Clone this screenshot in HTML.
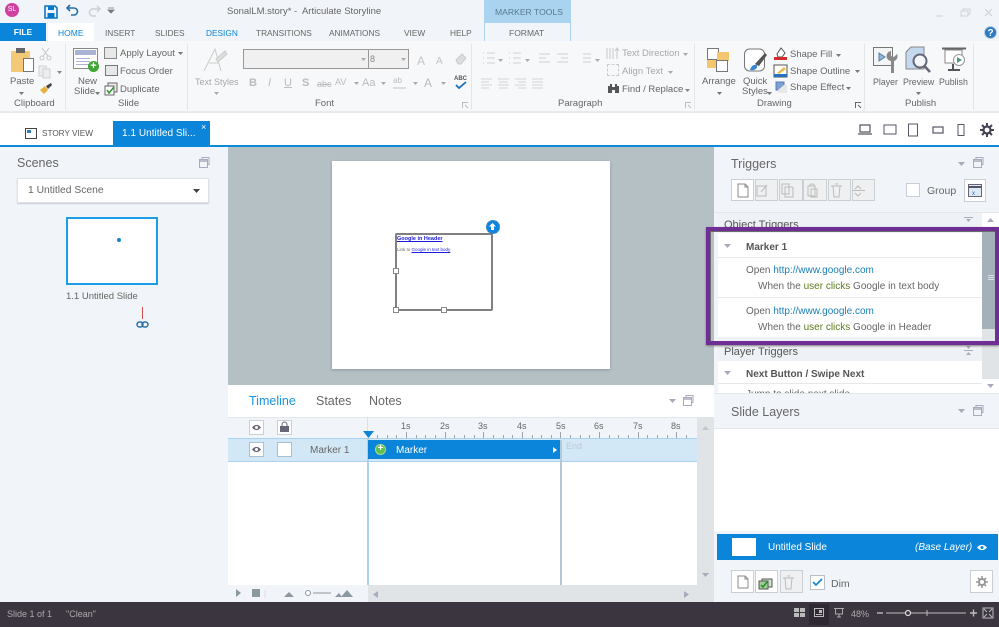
<!DOCTYPE html>
<html><head><meta charset="utf-8"><style>
html,body{margin:0;padding:0;background:#fff}
#p{position:relative;width:999px;height:627px;overflow:hidden;background:#fff;font-family:"Liberation Sans",sans-serif;color:#666;font-size:9.5px;filter:blur(.35px)}
.a{position:absolute}
.t{position:absolute;white-space:nowrap;line-height:12px;margin-top:1px}
.g{color:#a8a8a8}
.b{position:absolute;box-sizing:border-box;border:1px solid #c9cfd3;background:#fff}
svg{position:absolute;overflow:visible}
</style></head><body><div id="p">
<!-- backgrounds -->
<div class="a" style="left:0;top:0;width:999px;height:41px;background:#f1f4f8"></div>
<div class="a" style="left:0;top:41px;width:999px;height:72px;background:#f7f8f9;border-bottom:2px solid #e8eaec;box-sizing:border-box"></div>
<div class="a" style="left:0;top:145px;width:999px;height:2px;background:#0a8ad9"></div>
<div class="a" style="left:0;top:147px;width:228px;height:455px;background:#f1f4f8"></div>
<div class="a" style="left:228px;top:147px;width:486px;height:238px;background:#b5c0c5"></div>
<div class="a" style="left:714px;top:147px;width:285px;height:455px;background:#f1f4f8"></div>

<!-- title bar -->
<div class="a" style="left:5px;top:3px;width:14px;height:14px;border-radius:50%;background:#d0409f;color:#fff;font-size:7px;line-height:14px;text-align:center">SL</div>
<svg style="left:44px;top:5px" width="14" height="14"><path d="M1 1h10l2 2v10H1z" fill="none" stroke="#0a78c8" stroke-width="1.6"/><path d="M4 1h6v4H4zM3.500 8h7v5h-7z" fill="#0a78c8"/></svg>
<svg style="left:66px;top:4px" width="13" height="12"><path d="M4 1L1 4l3 3M1 4h7a3.500 3.500 0 0 1 0 7H5" fill="none" stroke="#2a6fa8" stroke-width="1.600"/></svg>
<svg style="left:88px;top:5px" width="13" height="12" opacity=".35"><path d="M9 1l3 3-3 3M12 4H5a3.500 3.500 0 0 0 0 7h3" fill="none" stroke="#8a8a8a" stroke-width="1.400"/></svg>
<svg style="left:108px;top:8px" width="7" height="6"><path d="M0 0h6M0 2h6l-3 3z" stroke="#777" stroke-width=".8" fill="#777"/></svg>
<span class="t" style="left:227px;top:5px;font-size:9.500px;color:#666">SonalLM.story* -&nbsp; Articulate Storyline</span>
<div class="a" style="left:484px;top:0;width:87px;height:41px;background:#a9d3ef"></div>
<div class="a" style="left:485px;top:23px;width:85px;height:18px;background:#f1f4f8"></div>
<span class="t" style="left:495px;top:5px;font-size:8.600px;color:#587a90">MARKER TOOLS</span>
<span class="t" style="left:509px;top:26px;font-size:8.500px;color:#666">FORMAT</span>
<svg style="left:936px;top:8px" width="60" height="10" stroke="#d0d4d8" fill="none"><path d="M0 8h7"/><path d="M25 3h7v5h-7zM27 3V1h7v5h-2"/><path d="M49 1l7 7M56 1l-7 7" stroke-width="1.200"/></svg>
<div class="a" style="left:984px;top:26px;width:13px;height:13px;border-radius:50%;background:#2b7cc4;color:#fff;font-size:10px;font-weight:bold;line-height:13px;text-align:center;border:1px solid #bcd;box-sizing:border-box">?</div>

<!-- tabs -->
<div class="a" style="left:0;top:23px;width:46px;height:18px;background:#0a85d9;color:#fff;font-size:8.500px;line-height:19px;text-align:center;font-weight:bold">FILE</div>
<div class="a" style="left:48px;top:23px;width:46px;height:18px;background:#fff"></div>
<span class="t" style="left:58px;top:26px;font-size:8.500px;color:#0a85d9">HOME</span>
<span class="t" style="left:105px;top:26px;font-size:8.300px">INSERT</span>
<span class="t" style="left:155px;top:26px;font-size:8.300px">SLIDES</span>
<span class="t" style="left:206px;top:26px;font-size:8.300px;color:#0a85d9">DESIGN</span>
<span class="t" style="left:256px;top:26px;font-size:8.300px">TRANSITIONS</span>
<span class="t" style="left:329px;top:26px;font-size:8.300px">ANIMATIONS</span>
<span class="t" style="left:404px;top:26px;font-size:8.300px">VIEW</span>
<span class="t" style="left:450px;top:26px;font-size:8.300px">HELP</span>

<!-- ribbon separators -->
<div class="a" style="left:65px;top:44px;width:1px;height:66px;background:#e4e6e8"></div>
<div class="a" style="left:187px;top:44px;width:1px;height:66px;background:#e4e6e8"></div>
<div class="a" style="left:471px;top:44px;width:1px;height:66px;background:#e4e6e8"></div>
<div class="a" style="left:694px;top:44px;width:1px;height:66px;background:#e4e6e8"></div>
<div class="a" style="left:864px;top:44px;width:1px;height:66px;background:#e4e6e8"></div>
<div class="a" style="left:973px;top:44px;width:1px;height:66px;background:#e4e6e8"></div>

<!-- clipboard -->
<div class="a" style="left:11px;top:51px;width:19px;height:21px;background:#f3c877;border-radius:1px"></div>
<div class="a" style="left:16px;top:48px;width:9px;height:5px;background:#666"></div>
<div class="a" style="left:23px;top:58px;width:11px;height:14px;background:#fff;border:1px solid #777;box-sizing:border-box"></div>
<svg style="left:39px;top:47px" width="13" height="14" stroke="#c4c8cc" fill="none"><path d="M3 1l6 8M10 1L4 9"/><circle cx="3" cy="11" r="2"/><circle cx="10" cy="11" r="2"/></svg>
<svg style="left:38px;top:65px" width="14" height="14" stroke="#cdd0d3" fill="#eee"><path d="M1 1h7v10H1z"/><path d="M5 4h7v9H5z"/></svg>
<svg style="left:57px;top:71px" width="5" height="3"><path d="M0 0h5L2.500 3z" fill="#888"/></svg>
<span class="t" style="left:10px;top:75px">Paste</span>
<svg style="left:19px;top:92px" width="5" height="3"><path d="M0 0h5L2.500 3z" fill="#777"/></svg>
<svg style="left:39px;top:82px" width="14" height="13"><path d="M1 8l5-4 3 4-4 4z" fill="#e8b040"/><path d="M7 4l5-3 1 2-4 4z" fill="#444"/></svg>
<span class="t" style="left:14px;top:97px;font-size:9.500px">Clipboard</span>

<!-- slide -->
<div class="a" style="left:73px;top:48px;width:25px;height:21px;background:#fff;border:1px solid #888;box-sizing:border-box"></div>
<div class="a" style="left:75px;top:50px;width:21px;height:5px;background:#aab4d4"></div>
<div class="a" style="left:76px;top:58px;width:14px;height:1px;background:#aab4d4"></div>
<div class="a" style="left:76px;top:61px;width:14px;height:1px;background:#aab4d4"></div>
<div class="a" style="left:76px;top:64px;width:14px;height:1px;background:#aab4d4"></div>
<div class="a" style="left:88px;top:61px;width:11px;height:11px;border-radius:50%;background:#3fa535;color:#fff;font-size:11px;line-height:10px;text-align:center;font-weight:bold">+</div>
<span class="t" style="left:78px;top:75px">New</span>
<span class="t" style="left:74px;top:85px">Slide</span>
<svg style="left:95px;top:92px" width="5" height="3"><path d="M0 0h5L2.500 3z" fill="#777"/></svg>
<div class="a" style="left:104px;top:47px;width:13px;height:12px;background:#e8e8e8;border:1px solid #888;box-sizing:border-box"></div>
<div class="a" style="left:105px;top:65px;width:13px;height:11px;background:#e8e8e8;border:1.500px solid #777;box-sizing:border-box"></div>
<svg style="left:104px;top:82px" width="14" height="14"><path d="M4 1h9v9H4z" fill="#eee" stroke="#666"/><path d="M1 4h9v9H1z" fill="#fff" stroke="#666"/><path d="M3 8l2 3 5-6" fill="none" stroke="#3a9a3a" stroke-width="1.600"/></svg>
<span class="t" style="left:120px;top:47px">Apply Layout</span>
<svg style="left:178px;top:52px" width="5" height="3"><path d="M0 0h5L2.500 3z" fill="#777"/></svg>
<span class="t" style="left:120px;top:65px">Focus Order</span>
<span class="t" style="left:120px;top:83px">Duplicate</span>
<span class="t" style="left:118px;top:97px;font-size:9.500px">Slide</span>

<!-- font -->
<svg style="left:202px;top:47px" width="28" height="26" stroke="#ccc" fill="none"><path d="M2 24L13 2l6 22M7 16h10"/><path d="M14 12l9-8 2 3-9 8z" fill="#ddd"/></svg>
<span class="t g" style="left:195px;top:75px;font-size:9px">Text Styles</span>
<svg style="left:214px;top:92px" width="5" height="3"><path d="M0 0h5L2.500 3z" fill="#aaa"/></svg>
<div class="a" style="left:243px;top:49px;width:126px;height:20px;background:#f0f0f0;border:1px solid #999;box-sizing:border-box"></div>
<div class="a" style="left:368px;top:49px;width:41px;height:20px;background:#f0f0f0;border:1px solid #999;box-sizing:border-box"></div>
<span class="t" style="left:370px;top:52px;font-size:9px;color:#888">8</span>
<svg style="left:361px;top:58px" width="5" height="3"><path d="M0 0h5L2.500 3z" fill="#aaa"/></svg>
<svg style="left:401px;top:58px" width="5" height="3"><path d="M0 0h5L2.500 3z" fill="#aaa"/></svg>
<span class="t" style="left:417px;top:54px;font-size:12px;color:#c4c4c4">A</span>
<span class="t" style="left:436px;top:55px;font-size:10px;color:#c4c4c4">A</span>
<svg style="left:455px;top:53px" width="12" height="12"><path d="M1 7l6-6 4 4-5 6H3z" fill="#ddd" stroke="#ccc"/></svg>
<span class="t" style="left:249px;top:76px;color:#bbb;font-weight:bold;font-size:11px">B</span>
<span class="t" style="left:268px;top:76px;color:#bbb;font-style:italic;font-size:11px">I</span>
<span class="t" style="left:284px;top:76px;color:#bbb;text-decoration:underline;font-size:11px">U</span>
<span class="t" style="left:302px;top:76px;color:#bbb;font-weight:bold;font-size:11px">S</span>
<span class="t" style="left:317px;top:77px;color:#bbb;font-size:9px;text-decoration:line-through">abc</span>
<span class="t" style="left:335px;top:75px;color:#bbb;font-size:9px">AV</span>
<span class="t" style="left:362px;top:76px;color:#bbb;font-size:11px">Aa</span>
<span class="t" style="left:393px;top:74px;color:#bbb;font-size:8px">ab</span>
<div class="a" style="left:393px;top:87px;width:13px;height:2px;background:#ddd"></div>
<span class="t" style="left:424px;top:76px;color:#bbb;font-size:12px">A</span>
<svg style="left:354px;top:82px" width="90" height="3" fill="#aaa"><path d="M0 0h5L2.500 3zM27 0h5l-2.500 3zM59 0h5l-2.500 3zM87 0h5l-2.500 3z"/></svg>
<span class="t" style="left:454px;top:72px;font-size:6px;font-weight:bold;color:#555">ABC</span>
<svg style="left:455px;top:81px" width="12" height="9"><path d="M1 4l3 3 7-6" fill="none" stroke="#1f6fc0" stroke-width="1.800"/></svg>
<span class="t" style="left:315px;top:97px;font-size:9.500px">Font</span>
<svg style="left:462px;top:102px" width="7" height="7" stroke="#bbb" fill="none"><path d="M.5 6V.5H6M3 3l3 3"/></svg>

<!-- paragraph -->
<svg style="left:481px;top:52px" width="130" height="14" stroke="#d0d0d0" fill="none"><path d="M2 1h1M6 1h8M2 6h1M6 6h8M2 11h1M6 11h8M28 1h1M32 1h8M28 6h1M32 6h8M28 11h1M32 11h8M58 2h11M58 6h7M58 10h11M76 2h11M80 6h7M76 10h11M102 2h8M102 6h8M102 10h8"/></svg>
<svg style="left:498px;top:59px" width="103" height="3" fill="#aaa"><path d="M0 0h5L2.500 3zM27 0h5l-2.500 3zM97 0h5l-2.500 3z"/></svg>
<svg style="left:481px;top:78px" width="65" height="11" stroke="#d4d4d4" fill="none"><path d="M0 1h11M0 4h8M0 7h11M0 10h8M17 1h11M18 4h9M17 7h11M18 10h9M34 1h11M37 4h8M34 7h11M37 10h8M51 1h11M51 4h11M51 7h11M51 10h11"/></svg>
<svg style="left:606px;top:47px" width="14" height="13" stroke="#c8c8c8" fill="none"><path d="M1 1v11M4 1v11M7 1v11M11 12V2M9 4l2-3 2 3"/></svg>
<span class="t g" style="left:622px;top:47px">Text Direction</span>
<div class="a" style="left:607px;top:64px;width:12px;height:12px;border:1px dashed #ccc;box-sizing:border-box"></div>
<span class="t g" style="left:622px;top:65px">Align Text</span>
<svg style="left:607px;top:83px" width="13" height="11"><path d="M1 3h4v7H1zM8 3h4v7H8zM3 1h2v3H3zM8 1h2v3H8zM5 4h3v3H5z" fill="#555"/></svg>
<span class="t" style="left:622px;top:83px">Find / Replace</span>
<svg style="left:683px;top:53px" width="5" height="3"><path d="M0 0h5L2.500 3z" fill="#aaa"/></svg>
<svg style="left:685px;top:89px" width="5" height="3"><path d="M0 0h5L2.500 3z" fill="#888"/></svg>
<svg style="left:668px;top:71px" width="5" height="3"><path d="M0 0h5L2.500 3z" fill="#aaa"/></svg>
<span class="t" style="left:558px;top:97px;font-size:9.500px">Paragraph</span>
<svg style="left:685px;top:102px" width="7" height="7" stroke="#bbb" fill="none"><path d="M.5 6V.5H6M3 3l3 3"/></svg>

<!-- drawing -->
<div class="a" style="left:707px;top:48px;width:10px;height:10px;background:#fff;border:1px solid #777"></div>
<div class="a" style="left:717px;top:52px;width:12px;height:9px;background:#f3c66f"></div>
<div class="a" style="left:707px;top:60px;width:12px;height:8px;background:#f3c66f"></div>
<div class="a" style="left:716px;top:60px;width:10px;height:10px;background:#fff;border:1px solid #777"></div>
<span class="t" style="left:702px;top:75px">Arrange</span>
<svg style="left:717px;top:92px" width="5" height="3"><path d="M0 0h5L2.500 3z" fill="#777"/></svg>
<svg style="left:744px;top:47px" width="24" height="26"><rect x="0.500" y="2" width="20" height="22" rx="5" fill="#fff" stroke="#777"/><path d="M11 17l10-11 2 2-8 11z" fill="#555"/><path d="M6 23c1-4 4-6 7-5 1 3-2 6-7 5z" fill="#3a86d0"/></svg>
<span class="t" style="left:743px;top:75px">Quick</span>
<span class="t" style="left:742px;top:85px">Styles</span>
<svg style="left:767px;top:92px" width="5" height="3"><path d="M0 0h5L2.500 3z" fill="#777"/></svg>
<svg style="left:773px;top:47px" width="16" height="14"><path d="M4 7l4-6 4 5-3 4H5z" fill="#fff" stroke="#555"/><rect x="1" y="10" width="13" height="3" fill="#d42b2b"/></svg>
<svg style="left:773px;top:64px" width="16" height="14"><rect x="1" y="1" width="13" height="12" fill="#fff" stroke="#555"/><path d="M4 9l7-6 2 2-7 5z" fill="#f0b840"/><rect x="1" y="10" width="13" height="3" fill="#2a70c0"/></svg>
<svg style="left:773px;top:80px" width="16" height="15"><rect x="3" y="2" width="8" height="8" fill="#7d9fd4" stroke="#5a7db8"/><path d="M11 5h3v8H5v-3" fill="#e8e8e8"/></svg>
<span class="t" style="left:790px;top:48px">Shape Fill</span>
<span class="t" style="left:790px;top:65px">Shape Outline</span>
<span class="t" style="left:790px;top:81px">Shape Effect</span>
<svg style="left:836px;top:54px" width="5" height="3"><path d="M0 0h5L2.500 3z" fill="#777"/></svg>
<svg style="left:855px;top:70px" width="5" height="3"><path d="M0 0h5L2.500 3z" fill="#777"/></svg>
<svg style="left:846px;top:87px" width="5" height="3"><path d="M0 0h5L2.500 3z" fill="#777"/></svg>
<span class="t" style="left:757px;top:97px;font-size:9.500px">Drawing</span>
<svg style="left:855px;top:102px" width="7" height="7" stroke="#666" fill="none"><path d="M.5 6V.5H6M3 3l3 3"/></svg>

<!-- publish -->
<svg style="left:873px;top:47px" width="25" height="28"><rect x=".5" y=".5" width="19" height="18" fill="#f2f4f6" stroke="#777"/><path d="M6 6l6 4-6 4z" fill="#8eb4da" stroke="#5a7fa8"/><path d="M14 7a5 5 0 0 0 4 7v12h3V14a5 5 0 0 0 3-7l-3 3-3-1V4a5 5 0 0 0-4 3z" fill="#888"/></svg>
<svg style="left:905px;top:46px" width="27" height="28"><path d="M6 1h13v22H1V6z" fill="#c4d8ee" stroke="#888"/><circle cx="15" cy="15" r="6.500" fill="#f4f7fa" stroke="#667" stroke-width="2"/><path d="M19.500 20l5.500 6" stroke="#667" stroke-width="2.500"/></svg>
<svg style="left:942px;top:47px" width="26" height="27"><path d="M0 1.500h24" stroke="#666" stroke-width="2"/><rect x="3" y="3" width="17" height="13" fill="#fff" stroke="#888"/><circle cx="17" cy="13" r="5.500" fill="#fff" stroke="#999"/><path d="M15 10l5 3-5 3z" fill="#4f9a78"/><path d="M6 23h12M11 17v6" stroke="#555" stroke-width="2"/></svg>
<span class="t" style="left:873px;top:75px;font-size:8.800px">Player</span>
<span class="t" style="left:903px;top:75px;font-size:8.800px">Preview</span>
<svg style="left:916px;top:92px" width="5" height="3"><path d="M0 0h5L2.500 3z" fill="#777"/></svg>
<span class="t" style="left:939px;top:75px;font-size:8.800px">Publish</span>
<span class="t" style="left:905px;top:97px;font-size:9.500px">Publish</span>

<!-- doc tabs -->
<div class="a" style="left:25px;top:128px;width:12px;height:11px;background:#fff;border:1px solid #444;box-sizing:border-box"></div>
<div class="a" style="left:27px;top:130px;width:4px;height:3px;background:#2a7dc0"></div>
<span class="t" style="left:42px;top:127px;font-size:8.200px;color:#555">STORY VIEW</span>
<div class="a" style="left:113px;top:121px;width:97px;height:25px;background:#0a85d9"></div>
<span class="t" style="left:122px;top:127px;font-size:10.100px;color:#fff">1.1 Untitled Sli...</span>
<span class="t" style="left:201px;top:120px;font-size:9px;color:#fff">×</span>
<svg style="left:858px;top:123px" width="135" height="15" stroke="#556" fill="none"><path d="M2 2h10v7H2zM0 11h14" stroke-width="1.200"/><rect x="26" y="2" width="12" height="9"/><rect x="50.500" y="1" width="9" height="12"/><rect x="75" y="4" width="10" height="6" stroke-width="1.200"/><rect x="100" y="1.500" width="6" height="11"/></svg>
<svg style="left:980px;top:123px" width="14" height="14"><circle cx="7" cy="7" r="3.500" fill="none" stroke="#445" stroke-width="2.200"/><path d="M7 0v3M7 11v3M0 7h3M11 7h3M2 2l2 2M10 10l2 2M12 2l-2 2M4 10l-2 2" stroke="#445" stroke-width="2"/></svg>

<!-- scenes -->
<span class="t" style="left:17px;top:155px;font-size:12.500px;line-height:14px">Scenes</span>
<svg style="left:199px;top:157px" width="11" height="11" stroke="#aab" fill="none"><path d="M3 2V.5h7v7H8.500"/><rect x=".5" y="2.500" width="8" height="8"/><path d="M.5 4h8" stroke-width="1.500"/></svg>
<div class="a" style="left:17px;top:178px;width:192px;height:25px;background:#fff;border:1px solid #dde2e6;box-sizing:border-box;box-shadow:0 1px 1px #ccd"></div>
<span class="t" style="left:28px;top:184px;font-size:10.300px">1 Untitled Scene</span>
<svg style="left:193px;top:189px" width="7" height="4"><path d="M0 0h7L3.500 4z" fill="#444"/></svg>
<div class="a" style="left:66px;top:217px;width:92px;height:68px;background:#fff;border:2px solid #1b9de8;box-sizing:border-box"></div>
<div class="a" style="left:117px;top:238px;width:4px;height:4px;border-radius:50%;background:#1a80c8"></div>
<span class="t" style="left:66px;top:290px;font-size:9.500px">1.1 Untitled Slide</span>
<div class="a" style="left:142px;top:307px;width:1px;height:12px;background:#d05050"></div>
<svg style="left:136px;top:321px" width="13" height="7"><rect x="1" y="1" width="6" height="5" rx="2.500" fill="none" stroke="#2a6fa8" stroke-width="1.500"/><rect x="6" y="1" width="6" height="5" rx="2.500" fill="none" stroke="#2a6fa8" stroke-width="1.500"/></svg>

<!-- slide canvas -->
<div class="a" style="left:332px;top:161px;width:278px;height:208px;background:#fff;box-shadow:0 1px 3px #8a979d"></div>
<div class="a" style="left:395px;top:233px;width:98px;height:78px;border:2px solid #808080;border-radius:2px;box-sizing:border-box"></div>
<span class="t" style="left:397px;top:235px;font-size:5.500px;line-height:7px;color:#1a1ae0;font-weight:bold;text-decoration:underline">Google in Header</span>
<span class="t" style="left:397px;top:246px;font-size:4.500px;line-height:6px;color:#666">Link to <span style="color:#1a1ae0;text-decoration:underline">Google in text body</span></span>
<div class="a" style="left:393px;top:268px;width:6px;height:6px;background:#fff;border:1px solid #888;box-sizing:border-box"></div>
<div class="a" style="left:393px;top:307px;width:6px;height:6px;background:#fff;border:1px solid #888;box-sizing:border-box"></div>
<div class="a" style="left:441px;top:307px;width:6px;height:6px;background:#fff;border:1px solid #888;box-sizing:border-box"></div>
<div class="a" style="left:486px;top:220px;width:12px;height:12px;border-radius:50%;background:#0a85e0;border:1px dashed #5a8ab0"></div>
<svg style="left:489px;top:223px" width="7" height="8"><path d="M3.500 0L7 3.500H5V7H2V3.500H0z" fill="#fff"/></svg>

<!-- triggers -->
<span class="t" style="left:731px;top:156px;font-size:12.500px;line-height:14px">Triggers</span>
<svg style="left:958px;top:162px" width="7" height="4"><path d="M0 0h7L3.500 4z" fill="#aab"/></svg>
<svg style="left:973px;top:157px" width="11" height="11" stroke="#aab" fill="none"><path d="M3 2V.5h7v7H8.500"/><rect x=".5" y="2.500" width="8" height="8"/><path d="M.5 4h8" stroke-width="1.500"/></svg>
<div class="b" style="left:731px;top:179px;width:23px;height:22px"></div>
<div class="b" style="left:755px;top:179px;width:23px;height:22px;background:#eef0f2"></div>
<div class="b" style="left:779px;top:179px;width:24px;height:22px;background:#eef0f2"></div>
<div class="b" style="left:803px;top:179px;width:24px;height:22px;background:#eef0f2"></div>
<div class="b" style="left:828px;top:179px;width:23px;height:22px;background:#eef0f2"></div>
<div class="b" style="left:852px;top:179px;width:23px;height:22px;background:#eef0f2"></div>
<svg style="left:737px;top:183px" width="135" height="15" fill="none" stroke="#888"><path d="M1 1h7l3 3v10H1zM8 1v3h3"/><g stroke="#bbb"><path d="M20 3h9v10h-9zM24 9l6-7"/><path d="M45 1h7v10h-7zM48 4h7l1 1v9h-8z"/><path d="M71 3h7v10h-7zM74 6h6v8h-6zM72 3l2-2h2l2 2"/><path d="M94 3h11M96 3l1 11h5l1-11M98 1h3"/><path d="M118 6l3-3 3 3M118 10l3 3 3-3M115 7.500h13"/></g></svg>
<div class="b" style="left:906px;top:183px;width:14px;height:14px"></div>
<span class="t" style="left:927px;top:184px;font-size:10.500px">Group</span>
<div class="b" style="left:964px;top:179px;width:22px;height:23px"></div>
<svg style="left:968px;top:184px" width="14" height="13"><rect x=".5" y=".5" width="13" height="12" fill="#dce8f4" stroke="#667"/><path d="M.5 3h13" stroke="#556" stroke-width="2"/></svg>
<span class="t" style="left:972px;top:187px;font-size:6px;color:#3a70b0">x</span>

<div class="a" style="left:714px;top:212px;width:285px;height:1px;background:#e3e7ea"></div>
<div class="a" style="left:718px;top:213px;width:264px;height:180px;background:#fff"></div>
<div class="a" style="left:718px;top:213px;width:264px;height:20px;background:#eef1f5"></div>
<span class="t" style="left:724px;top:218px;font-size:11px;color:#555">Object Triggers</span>
<div class="a" style="left:982px;top:213px;width:17px;height:180px;background:#e1e4e7"></div>
<div class="a" style="left:982px;top:213px;width:17px;height:16px;background:#fff"></div>
<div class="a" style="left:982px;top:379px;width:17px;height:14px;background:#fff"></div>
<div class="a" style="left:982px;top:231px;width:17px;height:98px;background:#a5b1b9"></div>
<svg style="left:987px;top:218px" width="7" height="4"><path d="M3.500 0L7 4H0z" fill="#aab"/></svg>
<svg style="left:987px;top:384px" width="7" height="4"><path d="M0 0h7L3.500 4z" fill="#aab"/></svg>
<svg style="left:988px;top:275px" width="6" height="6" stroke="#dde"><path d="M0 .5h6M0 2.500h6M0 4.500h6"/></svg>

<svg style="left:724px;top:244px" width="7" height="4"><path d="M0 0h7L3.500 4z" fill="#aab"/></svg>
<span class="t" style="left:746px;top:241px;font-size:10px;font-weight:bold;color:#555">Marker 1</span>
<div class="a" style="left:718px;top:257px;width:264px;height:1px;background:#e6e8ea"></div>
<span class="t" style="left:746px;top:264px;font-size:10px">Open <span style="color:#1a80b8">http://www.google.com</span></span>
<span class="t" style="left:758px;top:280px;font-size:10px">When the <span style="color:#5c7a20">user clicks</span> Google in text body</span>
<div class="a" style="left:718px;top:297px;width:264px;height:1px;background:#e6e8ea"></div>
<span class="t" style="left:746px;top:305px;font-size:10px">Open <span style="color:#1a80b8">http://www.google.com</span></span>
<span class="t" style="left:758px;top:321px;font-size:10px">When the <span style="color:#5c7a20">user clicks</span> Google in Header</span>

<div class="a" style="left:718px;top:337px;width:264px;height:24px;background:#eef1f5"></div>
<span class="t" style="left:724px;top:345px;font-size:11px;color:#555">Player Triggers</span>
<svg style="left:964px;top:346px" width="9" height="10" stroke="#aab" fill="#aab"><path d="M0 4.500h9" fill="none"/><path d="M2 0h5L4.500 3zM2 9h5L4.500 6z" stroke="none"/></svg>
<svg style="left:964px;top:217px" width="9" height="8" stroke="#aab" fill="#aab"><path d="M0 .5h9" fill="none"/><path d="M2 2h5L4.500 5z" stroke="none"/></svg>
<svg style="left:724px;top:371px" width="7" height="4"><path d="M0 0h7L3.500 4z" fill="#aab"/></svg>
<span class="t" style="left:746px;top:368px;font-size:10px;font-weight:bold;color:#555">Next Button / Swipe Next</span>
<div class="a" style="left:718px;top:383px;width:264px;height:1px;background:#e6e8ea"></div>
<span class="t" style="left:746px;top:388px;font-size:10px;height:5px;overflow:hidden;line-height:12px">Jump to slide next slide</span>
<div class="a" style="left:714px;top:393px;width:285px;height:11px;background:#f1f4f8;border-top:1px solid #e3e7ea;box-sizing:border-box"></div>

<!-- highlight -->
<div class="a" style="left:706px;top:227px;width:293px;height:118px;box-sizing:border-box;border:4px solid #6f2e96;box-shadow:inset 1px 1px 0 #6b6b6b,0 1px 2px #777"></div>

<!-- slide layers -->
<span class="t" style="left:731px;top:404px;font-size:12.500px;line-height:14px">Slide Layers</span>
<svg style="left:958px;top:409px" width="7" height="4"><path d="M0 0h7L3.500 4z" fill="#aab"/></svg>
<svg style="left:973px;top:405px" width="11" height="11" stroke="#aab" fill="none"><path d="M3 2V.5h7v7H8.500"/><rect x=".5" y="2.500" width="8" height="8"/><path d="M.5 4h8" stroke-width="1.500"/></svg>
<div class="a" style="left:714px;top:428px;width:285px;height:103px;background:#fff;border-top:1px solid #e3e7ea;box-sizing:border-box"></div>
<div class="a" style="left:717px;top:534px;width:281px;height:26px;background:#0a85d9"></div>
<div class="a" style="left:732px;top:538px;width:24px;height:18px;background:#fff"></div>
<span class="t" style="left:768px;top:541px;font-size:10px;color:#fff">Untitled Slide</span>
<span class="t" style="left:915px;top:541px;font-size:10px;color:#fff;font-style:italic">(Base Layer)</span>
<svg style="left:977px;top:544px" width="10" height="7"><path d="M0 3.500C3 0 7 0 10 3.500 7 7 3 7 0 3.500z" fill="#fff"/><circle cx="5" cy="3.500" r="1.500" fill="#0a85d9"/></svg>
<div class="b" style="left:731px;top:570px;width:23px;height:23px"></div>
<div class="b" style="left:755px;top:570px;width:23px;height:23px"></div>
<div class="b" style="left:780px;top:570px;width:23px;height:23px;background:#eef0f2"></div>
<svg style="left:737px;top:575px" width="60" height="14" fill="none"><path d="M1 1h7l3 3v9H1zM8 1v3h3" stroke="#888"/><path d="M25 4h10v8H25z" fill="#cfe3c8" stroke="#555"/><path d="M22 6h9v8h-9z" fill="#9fcf97" stroke="#555"/><path d="M24 10l2 2 4-5" stroke="#2a8a2a" stroke-width="1.500"/><path d="M46 3h11M48 3l1 11h5l1-11M50 1h3" stroke="#bbb"/></svg>
<div class="b" style="left:810px;top:575px;width:15px;height:15px;border-color:#b8c0c6"></div>
<svg style="left:812px;top:578px" width="11" height="9"><path d="M1 4l3 3 6-6" fill="none" stroke="#0a85d9" stroke-width="1.600"/></svg>
<span class="t" style="left:831px;top:577px;font-size:10.500px">Dim</span>
<div class="b" style="left:970px;top:570px;width:23px;height:23px"></div>
<svg style="left:976px;top:576px" width="12" height="12"><circle cx="6" cy="6" r="3" fill="none" stroke="#999" stroke-width="2"/><path d="M6 0v3M6 9v3M0 6h3M9 6h3M2 2l2 2M8 8l2 2M10 2L8 4M4 8l-2 2" stroke="#999" stroke-width="1.600"/></svg>

<!-- timeline -->
<div class="a" style="left:228px;top:385px;width:486px;height:217px;background:#fff"></div>
<span class="t" style="left:249px;top:393px;font-size:12.500px;line-height:14px;color:#1a94e0">Timeline</span>
<span class="t" style="left:316px;top:393px;font-size:12.500px;line-height:14px">States</span>
<span class="t" style="left:369px;top:393px;font-size:12.500px;line-height:14px">Notes</span>
<svg style="left:669px;top:399px" width="7" height="4"><path d="M0 0h7L3.500 4z" fill="#aab"/></svg>
<svg style="left:683px;top:395px" width="11" height="11" stroke="#aab" fill="none"><path d="M3 2V.5h7v7H8.500"/><rect x=".5" y="2.500" width="8" height="8"/><path d="M.5 4h8" stroke-width="1.500"/></svg>
<div class="a" style="left:228px;top:417px;width:469px;height:21px;background:#f1f4f8;border-top:1px solid #e3e6ea;box-sizing:border-box"></div>
<div class="a" style="left:367px;top:417px;width:1px;height:21px;background:#dcdfe3"></div>
<div class="b" style="left:249px;top:420px;width:15px;height:15px"></div>
<div class="b" style="left:277px;top:420px;width:15px;height:15px"></div>
<svg style="left:252px;top:424px" width="9" height="7"><path d="M0 3.500C3 0 6 0 9 3.500 6 7 3 7 0 3.500z" fill="#667"/><circle cx="4.500" cy="3.500" r="1.500" fill="#fff"/></svg>
<svg style="left:280px;top:422px" width="9" height="10"><path d="M2 4V2.500a2.500 2.500 0 0 1 5 0V4" fill="none" stroke="#667"/><rect x="0" y="4" width="9" height="6" fill="#667"/></svg>
<span class="t" style="left:401px;top:419px;font-size:9px">1s</span>
<span class="t" style="left:440px;top:419px;font-size:9px">2s</span>
<span class="t" style="left:478px;top:419px;font-size:9px">3s</span>
<span class="t" style="left:517px;top:419px;font-size:9px">4s</span>
<span class="t" style="left:556px;top:419px;font-size:9px">5s</span>
<span class="t" style="left:594px;top:419px;font-size:9px">6s</span>
<span class="t" style="left:633px;top:419px;font-size:9px">7s</span>
<span class="t" style="left:671px;top:419px;font-size:9px">8s</span>
<svg style="left:368px;top:431px" width="329" height="7" stroke="#9aa4aa" stroke-width="1"><path d="M9.500 4v3M19.500 4v3M28.500 4v3M38.500 1v6M48.500 4v3M57.500 4v3M67.500 4v3M77.500 1v6M86.500 4v3M96.500 4v3M106.500 4v3M115.500 1v6M125.500 4v3M135.500 4v3M144.500 4v3M154.500 1v6M164.500 4v3M173.500 4v3M183.500 4v3M192.500 1v6M202.500 4v3M212.500 4v3M221.500 4v3M231.500 1v6M241.500 4v3M250.500 4v3M260.500 4v3M270.500 1v6M279.500 4v3M289.500 4v3M299.500 4v3M308.500 1v6M318.500 4v3"/></svg>
<div class="a" style="left:228px;top:438px;width:469px;height:24px;background:#d3e8f7;border-top:1px solid #a8d2ef;border-bottom:1px solid #a8d2ef;box-sizing:border-box"></div>
<svg style="left:363px;top:431px" width="11" height="7"><path d="M0 0h11L5.500 7z" fill="#0a85d9"/></svg>
<div class="a" style="left:367px;top:438px;width:2px;height:164px;background:#a8d2ef"></div>
<div class="a" style="left:560px;top:440px;width:1.500px;height:162px;background:#b4c8d6"></div>
<div class="b" style="left:249px;top:442px;width:15px;height:15px;border-color:#a8c0d0"></div>
<div class="b" style="left:277px;top:442px;width:15px;height:15px;border-color:#a8c0d0"></div>
<svg style="left:252px;top:446px" width="9" height="7"><path d="M0 3.500C3 0 6 0 9 3.500 6 7 3 7 0 3.500z" fill="#667"/><circle cx="4.500" cy="3.500" r="1.500" fill="#fff"/></svg>
<span class="t" style="left:310px;top:444px;font-size:10px">Marker 1</span>
<div class="a" style="left:368px;top:440px;width:192px;height:19px;background:#0a85d9"></div>
<div class="a" style="left:375px;top:444px;width:11px;height:11px;border-radius:50%;background:#5ec04a;border:1px solid #a5e08f;box-sizing:border-box;color:#fff;font-size:10px;line-height:8px;text-align:center;font-weight:bold">+</div>
<span class="t" style="left:396px;top:444px;font-size:10px;color:#fff">Marker</span>
<svg style="left:553px;top:447px" width="4" height="6"><path d="M0 0l4 3-4 3z" fill="#fff"/></svg>
<span class="t" style="left:566px;top:439px;font-size:9px;color:#bcc8d0">End</span>
<div class="a" style="left:697px;top:417px;width:17px;height:185px;background:#e1e4e7"></div>
<svg style="left:702px;top:426px" width="7" height="4"><path d="M3.500 0L7 4H0z" fill="#c0c6cc"/></svg>
<svg style="left:702px;top:573px" width="7" height="4"><path d="M0 0h7L3.500 4z" fill="#aab"/></svg>
<div class="a" style="left:228px;top:585px;width:140px;height:17px;background:#f1f4f8"></div>
<div class="a" style="left:368px;top:585px;width:329px;height:17px;background:#e1e4e7"></div>
<svg style="left:373px;top:591px" width="6" height="7"><path d="M0 3.500L5 0v7z" fill="#aab"/></svg>
<svg style="left:684px;top:591px" width="6" height="7"><path d="M5 3.500L0 0v7z" fill="#aab"/></svg>
<svg style="left:236px;top:589px" width="124" height="10"><path d="M0 0l5 4-5 4z" fill="#8a98a0"/><rect x="16" y="0" width="8" height="8" fill="#8a98a0"/><path d="M29 1v8" stroke="#dde"/><path d="M48 8h10l-5-5z" fill="#8a98a0"/><path d="M77 4h18" stroke="#8a98a0"/><circle cx="72" cy="4" r="2.500" fill="#fff" stroke="#8a98a0"/><path d="M99 8l4-4 3 4zM105 8l6-7 6 7z" fill="#8a98a0"/></svg>

<!-- status -->
<div class="a" style="left:0;top:602px;width:999px;height:25px;background:#3b3540"></div>
<span class="t" style="left:7px;top:607px;font-size:9px;color:#aaa">Slide 1 of 1</span>
<span class="t" style="left:66px;top:607px;font-size:9px;color:#aaa">"Clean"</span>
<div class="a" style="left:809px;top:604px;width:20px;height:21px;background:#2e2932"></div>
<svg style="left:794px;top:608px" width="12" height="10" fill="#bbb"><path d="M0 0h5v4H0zM6 0h5v4H6zM0 5h5v4H0zM6 5h5v4H6z"/></svg>
<svg style="left:814px;top:608px" width="10" height="10"><rect x=".5" y=".5" width="9" height="8" fill="none" stroke="#bbb"/><path d="M5 2h3v3H5zM2 6h6v1H2z" fill="#bbb"/></svg>
<svg style="left:834px;top:608px" width="10" height="10" stroke="#aaa" fill="none"><path d="M0 .5h10M1.500 1v5h7V1M5 6v3M3 9h4"/></svg>
<span class="t" style="left:851px;top:607px;font-size:9px;color:#aaa">48%</span>
<svg style="left:876px;top:607px" width="120" height="12"><path d="M1 6h6" stroke="#bbb" stroke-width="1.400"/><path d="M10 6h80" stroke="#bbb"/><path d="M51 3v6" stroke="#bbb"/><circle cx="32" cy="6" r="2.500" fill="#3b3540" stroke="#ddd" stroke-width="1.200"/><path d="M94 6h7M97.500 2.500v7" stroke="#bbb" stroke-width="1.400"/><rect x="107" y="1" width="10" height="10" fill="none" stroke="#bbb"/><path d="M108 2l3 3M116 2l-3 3M108 10l3-3M116 10l-3-3" stroke="#bbb"/></svg>
</div></body></html>
